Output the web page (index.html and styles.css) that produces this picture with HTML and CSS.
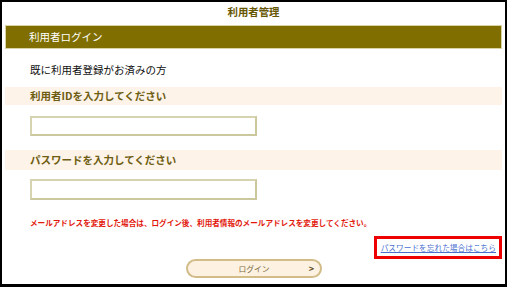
FILE: index.html
```html
<!DOCTYPE html>
<html lang="ja">
<head>
<meta charset="utf-8">
<link rel="stylesheet" href="styles.css">
</head>
<body>
<div class="frame">
  <div class="title">利用者管理</div>
  <div class="bar">利用者ログイン</div>
  <div class="lead">既に利用者登録がお済みの方</div>
  <div class="band">利用者IDを入力してください</div>
  <input class="field field-id" type="text">
  <div class="band band-pw">パスワードを入力してください</div>
  <input class="field field-pw" type="password">
  <p class="notice">メールアドレスを変更した場合は、ログイン後、利用者情報のメールアドレスを変更してください。</p>
  <div class="link-row"><a class="forgot" href="#">パスワードを忘れた場合はこちら</a></div>
  <div class="btn-row"><button class="login" type="button"><span class="login-label">ログイン</span><span class="chev">&gt;</span></button></div>
</div>
</body>
</html>
```
FILE: styles.css
```css
html, body {
  margin: 0;
  padding: 0;
  background: #fff;
}
.frame {
  width: 507px;
  height: 287px;
  box-sizing: border-box;
  border: 2px solid #000;
  border-bottom-width: 3px;
  padding: 0 3px;
  font-family: "Noto Sans CJK JP", "Noto Sans", sans-serif;
  overflow: hidden;
}
.title {
  height: 23px;
  line-height: 19px;
  text-align: center;
  font-weight: bold;
  font-size: 10.4px;
  color: #665600;
}
.bar {
  height: 24px;
  box-sizing: border-box;
  background: #806f00;
  border: 1px solid #d9d3a6;
  color: #fff;
  font-size: 10.5px;
  line-height: 22px;
  padding-left: 23px;
}
.lead {
  height: 38px;
  box-sizing: border-box;
  padding: 14px 0 0 25px;
  font-size: 10.5px;
  line-height: 14px;
  color: #111;
}
.band {
  height: 18px;
  line-height: 18px;
  background: #fdf3e8;
  padding-left: 25px;
  font-size: 10.5px;
  font-weight: bold;
  color: #6e5d12;
}
.band-pw {
  margin-top: 14px;
  height: 20px;
  line-height: 20px;
}
.field {
  display: block;
  margin: 11px 0 0 25px;
  width: 227px;
  height: 20px;
  box-sizing: border-box;
  border: 2px solid #cbc89e;
  border-top-color: #d6d3b0;
  border-left-color: #d6d3b0;
  background: #fff;
  padding: 0;
}
.field-pw {
  margin-top: 9px;
  height: 21px;
}
.notice {
  margin: 16px 0 0 25px;
  font-size: 7.6px;
  line-height: 14px;
  font-weight: bold;
  color: #e2180c;
}
.link-row {
  margin-top: 6px;
  display: flex;
  justify-content: flex-end;
}
.forgot {
  display: block;
  height: 23px;
  box-sizing: border-box;
  border: 3px solid #ee0000;
  padding: 0 3px 0 4px;
  font-size: 7.7px;
  line-height: 17px;
  color: #4a6fd0;
  text-decoration: underline;
  white-space: nowrap;
}
.btn-row {
  padding-left: 181px;
}
.login {
  position: relative;
  display: block;
  width: 136px;
  height: 19px;
  box-sizing: border-box;
  border: 2px solid #d2bd88;
  border-radius: 10px;
  background: #fdf1e2;
  font-family: "Noto Sans CJK JP", "Noto Sans", sans-serif;
  font-size: 7.8px;
  color: #7a6a3a;
  padding: 0;
  line-height: 15px;
  text-align: center;
}
.chev {
  position: absolute;
  right: 6px;
  top: 0;
  font-weight: bold;
  font-size: 9px;
  color: #5e5020;
}
```
